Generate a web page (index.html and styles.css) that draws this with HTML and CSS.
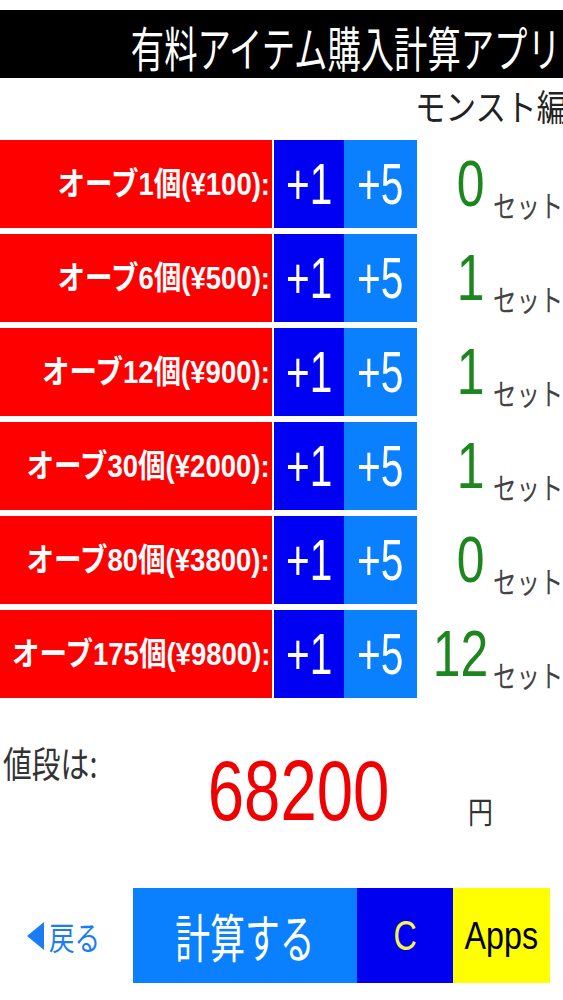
FILE: index.html
```html
<!DOCTYPE html>
<html lang="ja">
<head>
<meta charset="utf-8">
<title>有料アイテム購入計算アプリ</title>
<link rel="stylesheet" href="styles.css">
</head>
<body>
<header class="titlebar"><span class="sx title">有料アイテム購入計算アプリ</span></header>
<div class="subtitle"><span class="sx sub">モンスト編</span></div>

<div class="items">
  <div class="row">
    <div class="label"><span class="sx lab">オーブ1個(¥100):</span></div>
    <div class="btn plus1"><span class="sx pl">+1</span></div>
    <div class="btn plus5"><span class="sx pl">+5</span></div>
    <div class="count"><div class="num"><span class="sx n">0</span></div><div class="unit"><span class="sx u">セット</span></div></div>
  </div>
  <div class="row">
    <div class="label"><span class="sx lab">オーブ6個(¥500):</span></div>
    <div class="btn plus1"><span class="sx pl">+1</span></div>
    <div class="btn plus5"><span class="sx pl">+5</span></div>
    <div class="count"><div class="num"><span class="sx n">1</span></div><div class="unit"><span class="sx u">セット</span></div></div>
  </div>
  <div class="row">
    <div class="label"><span class="sx lab">オーブ12個(¥900):</span></div>
    <div class="btn plus1"><span class="sx pl">+1</span></div>
    <div class="btn plus5"><span class="sx pl">+5</span></div>
    <div class="count"><div class="num"><span class="sx n">1</span></div><div class="unit"><span class="sx u">セット</span></div></div>
  </div>
  <div class="row">
    <div class="label"><span class="sx lab">オーブ30個(¥2000):</span></div>
    <div class="btn plus1"><span class="sx pl">+1</span></div>
    <div class="btn plus5"><span class="sx pl">+5</span></div>
    <div class="count"><div class="num"><span class="sx n">1</span></div><div class="unit"><span class="sx u">セット</span></div></div>
  </div>
  <div class="row">
    <div class="label"><span class="sx lab">オーブ80個(¥3800):</span></div>
    <div class="btn plus1"><span class="sx pl">+1</span></div>
    <div class="btn plus5"><span class="sx pl">+5</span></div>
    <div class="count"><div class="num"><span class="sx n">0</span></div><div class="unit"><span class="sx u">セット</span></div></div>
  </div>
  <div class="row">
    <div class="label"><span class="sx lab">オーブ175個(¥9800):</span></div>
    <div class="btn plus1"><span class="sx pl">+1</span></div>
    <div class="btn plus5"><span class="sx pl">+5</span></div>
    <div class="count"><div class="num"><span class="sx n">12</span></div><div class="unit"><span class="sx u">セット</span></div></div>
  </div>
</div>

<div class="total">
  <div class="total-label"><span class="sx tl">値段は:</span></div>
  <div class="amount"><span class="sx am">68200</span></div>
  <div class="yen"><span class="sx yn">円</span></div>
</div>

<div class="actions">
  <div class="back">
    <svg class="back-arrow" width="18" height="28" viewBox="0 0 18 28"><polygon points="17,0 17,28 0,14" fill="#1a7df5"/></svg>
    <span class="sx bk">戻る</span>
  </div>
  <div class="act calc"><span class="sx ca">計算する</span></div>
  <div class="act clear"><span class="sx cl">C</span></div>
  <div class="act apps"><span class="sx ap">Apps</span></div>
</div>
</body>
</html>
```
FILE: styles.css
```css
html, body {
  margin: 0;
  padding: 0;
  background: #ffffff;
  overflow-x: hidden;
}
body {
  font-family: "Liberation Sans", "Noto Sans CJK JP", sans-serif;
  width: 563px;
}
.sx {
  display: inline-block;
  white-space: nowrap;
  transform: scale(var(--sx, 1), var(--sy, 1));
  flex-shrink: 0;
}

/* title */
.titlebar {
  margin-top: 10px;
  height: 68px;
  background: #000;
  display: flex;
  justify-content: flex-end;
  align-items: center;
  overflow: hidden;
}
.title {
  --sx: 0.775;
  --sy: 1.1;
  transform-origin: right center;
  color: #fff;
  font-family: "Noto Sans CJK JP", sans-serif;
  font-size: 43px;
  line-height: 43px;
  margin-top: 4px;
  margin-right: 2px;
}
.subtitle {
  height: 62px;
  display: flex;
  justify-content: flex-end;
  align-items: flex-start;
  overflow: hidden;
}
.sub {
  --sx: 0.85;
  transform-origin: right center;
  font-family: "Noto Sans CJK JP", sans-serif;
  font-size: 36px;
  line-height: 36px;
  color: #222;
  margin-top: 9px;
  margin-right: -4px;
}

/* item rows */
.items {
  display: flex;
  flex-direction: column;
  gap: 6px;
}
.row {
  display: grid;
  grid-template-columns: 272px 72px 73px 1fr;
  height: 88px;
}
.label {
  background: #fe0000;
  display: flex;
  justify-content: flex-end;
  align-items: center;
  padding-right: 2px;
  overflow: hidden;
}
.lab {
  --sx: 0.86;
  transform-origin: right center;
  color: #fff;
  font-weight: bold;
  font-size: 32px;
  line-height: 32px;
}
.btn {
  display: flex;
  justify-content: center;
  align-items: center;
  color: #fff;
}
.plus1 {
  background: #0000f2;
  margin-left: 2px;
}
.plus5 {
  background: #0a80ff;
}
.pl {
  --sx: 0.7;
  font-size: 58px;
  line-height: 58px;
}
.count {
  display: flex;
  align-items: center;
}
.num {
  width: 68px;
  flex: none;
  text-align: right;
}
.n {
  --sx: 0.78;
  transform-origin: right center;
  font-size: 64px;
  line-height: 64px;
  color: #1e861e;
}
.unit {
  align-self: flex-start;
  margin-top: 49px;
  margin-left: 8px;
}
.u {
  --sx: 0.78;
  transform-origin: left center;
  font-family: "Noto Sans CJK JP", sans-serif;
  font-size: 30px;
  line-height: 30px;
  color: #444;
}

/* total */
.total {
  height: 190px;
  display: flex;
  align-items: flex-start;
}
.total-label {
  width: 150px;
  flex: none;
  margin-top: 46px;
  padding-left: 3px;
  box-sizing: border-box;
}
.tl {
  --sx: 0.8;
  transform-origin: left center;
  font-family: "Noto Sans CJK JP", sans-serif;
  font-size: 36px;
  line-height: 36px;
  color: #333;
}
.amount {
  width: 298px;
  flex: none;
  text-align: center;
  margin-top: 49px;
}
.am {
  --sx: 0.76;
  font-size: 86px;
  line-height: 86px;
  color: #f00000;
}
.yen {
  margin-top: 97px;
  margin-left: 20px;
}
.yn {
  --sx: 0.83;
  transform-origin: left center;
  font-family: "Noto Sans CJK JP", sans-serif;
  font-size: 30px;
  line-height: 30px;
  color: #333;
}

/* bottom actions */
.actions {
  display: flex;
  height: 95px;
}
.back {
  width: 133px;
  flex: none;
  display: flex;
  align-items: center;
  padding-left: 27px;
  box-sizing: border-box;
  gap: 4px;
  color: #1a7df5;
}
.bk {
  --sx: 0.8;
  transform-origin: left center;
  font-family: "Noto Sans CJK JP", sans-serif;
  font-size: 32px;
  line-height: 32px;
}
.act {
  display: flex;
  justify-content: center;
  align-items: center;
}
.calc {
  width: 224px;
  background: #0a80ff;
  color: #fff;
}
.ca {
  --sx: 0.67;
  font-family: "Noto Sans CJK JP", sans-serif;
  font-size: 52px;
  line-height: 52px;
}
.clear {
  width: 96px;
  background: #0000f0;
  color: #f4f44a;
}
.cl {
  --sx: 0.77;
  font-size: 42px;
  line-height: 42px;
}
.apps {
  width: 97px;
  background: #ffff00;
  color: #000;
}
.ap {
  --sx: 0.85;
  font-size: 38px;
  line-height: 38px;
}
```
